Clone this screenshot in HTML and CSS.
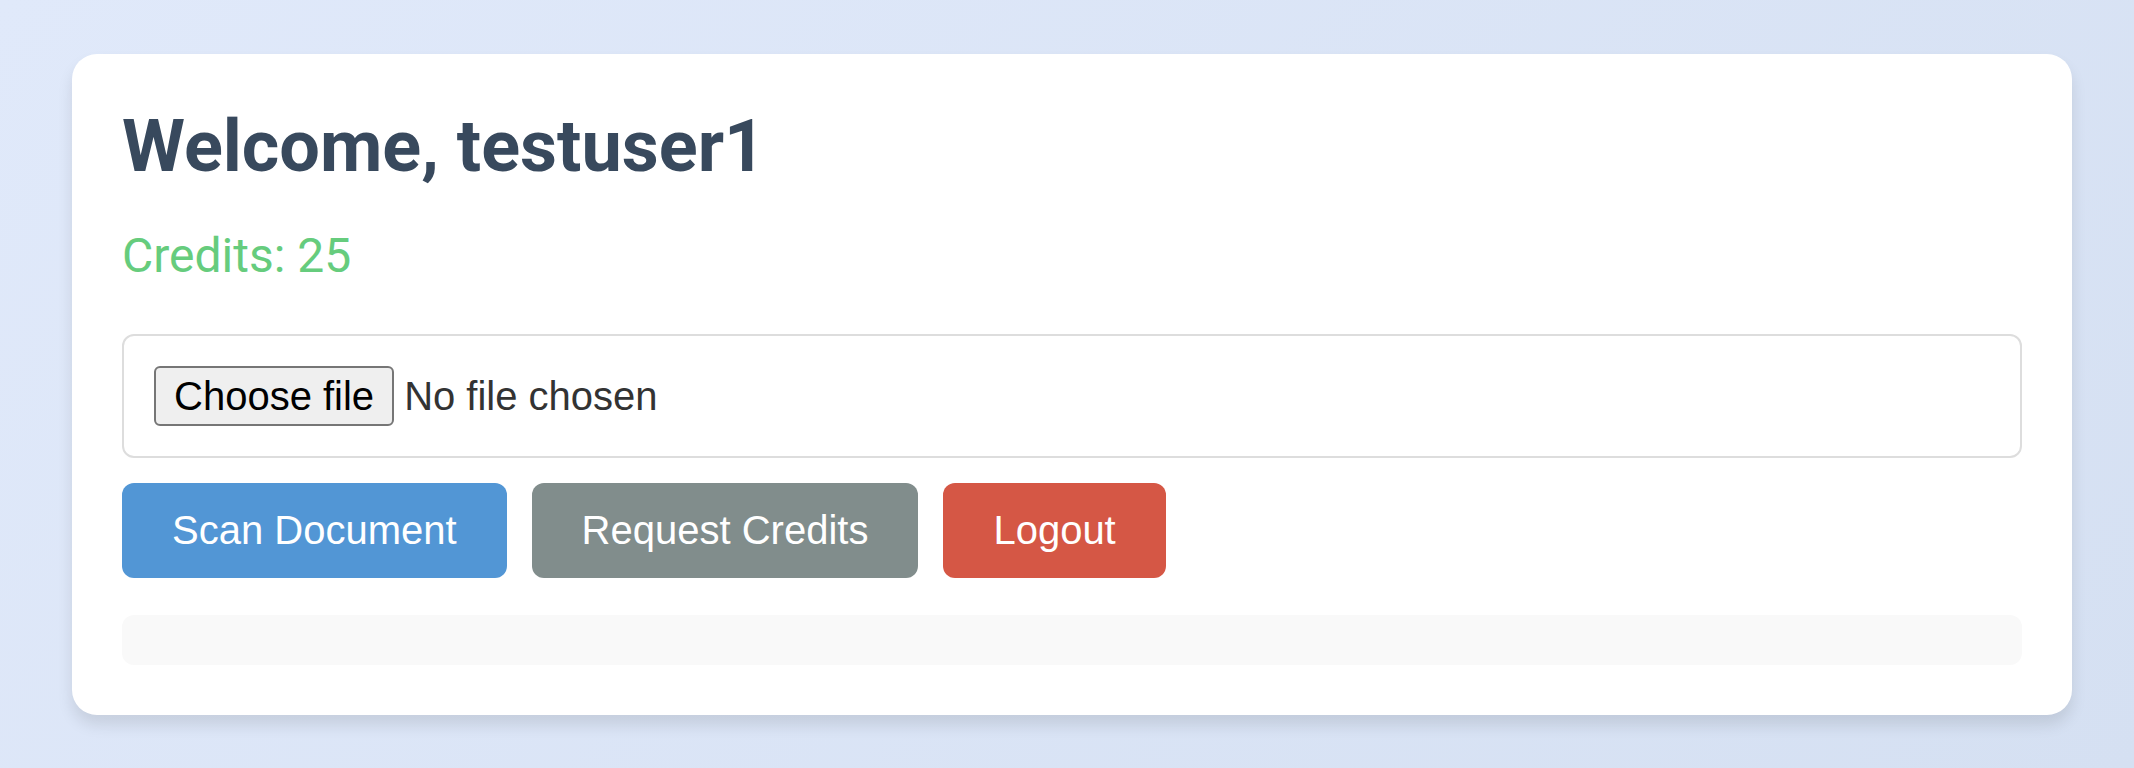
FILE: index.html
```
<!DOCTYPE html>
<html lang="en-GB">
<head>
<meta charset="utf-8">
<title>Dashboard</title>
<link rel="stylesheet" href="styles.css">
</head>
<body>
<main class="card">
  <h1 class="title">Welcome, testuser1</h1>
  <p class="credits">Credits: 25</p>
  <label class="file-field">
    <input class="file-input" type="file">
    <span class="file-button">Choose file</span>
    <span class="file-name">No file chosen</span>
  </label>
  <div class="actions">
    <button class="button button-scan" type="button">Scan Document</button>
    <button class="button button-request" type="button">Request Credits</button>
    <button class="button button-logout" type="button">Logout</button>
  </div>
  <div class="results"></div>
</main>
</body>
</html>
```

FILE: styles.css
```
* {
  box-sizing: border-box;
}

body {
  min-height: 100vh;
  margin: 0;
  padding: 54px 62px 54px 72px;
  background: linear-gradient(135deg, #e0e9fa, #d5e0f2);
  color: #333;
  font-family: Roboto, sans-serif;
}

.card {
  padding: 50px;
  border-radius: 25px;
  background: #fff;
  box-shadow: 0 10px 15px rgba(0, 0, 0, 0.1);
}

.title {
  margin: 0 0 38px;
  color: #38495d;
  font-size: 72px;
  line-height: 85px;
  font-weight: 700;
}

.credits {
  margin: 0 0 49px;
  color: #66cc7d;
  font-size: 48px;
  line-height: 58px;
}

.file-field {
  position: relative;
  display: flex;
  align-items: center;
  gap: 10px;
  padding: 30px;
  border: 2px solid #ddd;
  border-radius: 12px;
  font: 40px/46px "Liberation Sans", Arial, sans-serif;
}

/* The native control stays focusable and clickable over the whole field. */
.file-input {
  position: absolute;
  inset: 0;
  width: 100%;
  height: 100%;
  opacity: 0;
}

.file-button {
  padding: 5px 18px;
  border: 2px solid #767676;
  border-radius: 6px;
  background: #efefef;
  color: #000;
}

.file-input:focus-visible + .file-button {
  outline: 3px solid #5296d5;
}

.actions {
  display: flex;
  flex-wrap: wrap;
  gap: 25px;
  margin: 25px 0 37px;
}

.button {
  padding: 24px 50px;
  border: 0;
  border-radius: 12px;
  color: #fff;
  font: 40px/47px "Liberation Sans", Arial, sans-serif;
}

.button-scan {
  background: #5296d5;
}

.button-request {
  background: #818d8c;
}

.button-logout {
  background: #d55745;
}

.results {
  padding: 25px;
  border-radius: 12px;
  background: #f9f9f9;
}
```
